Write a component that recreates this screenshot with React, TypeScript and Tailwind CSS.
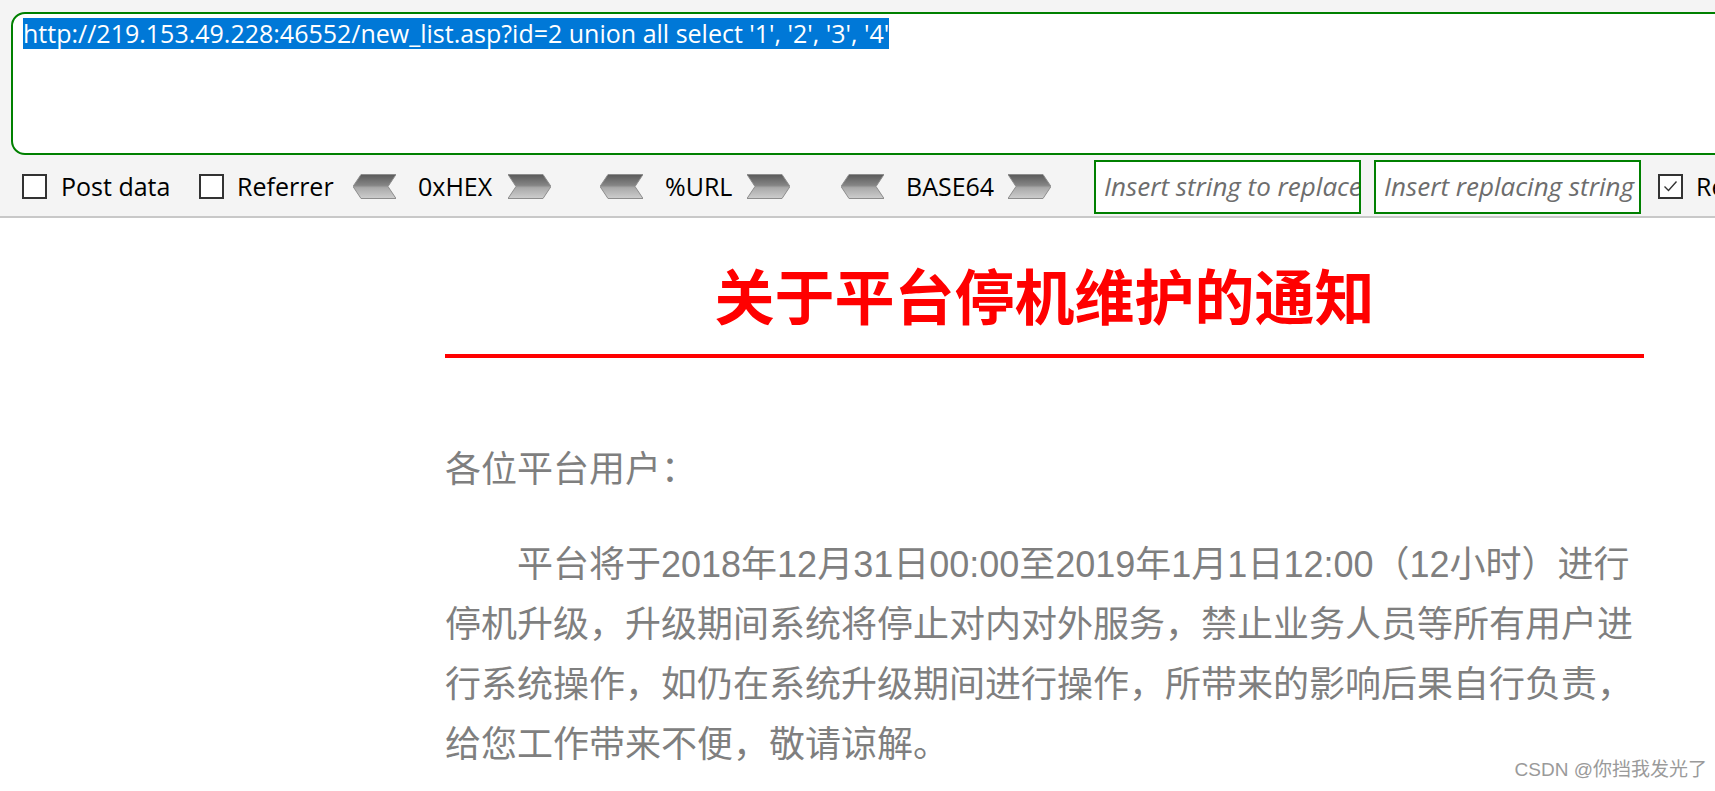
import type { ReactNode } from "react";

function Checkbox({ checked = false }: { checked?: boolean }) {
  return (
    <div className="w-[25px] h-[25px] shrink-0 border-2 border-[#333333] bg-white flex items-center justify-center">
      {checked && (
        <svg width="17" height="17" viewBox="0 0 17 17">
          <path d="M2.5 8.5 L6.5 12.5 L14.5 3.5" fill="none" stroke="#333" strokeWidth="1.4" />
        </svg>
      )}
    </div>
  );
}

function Chevron({ dir }: { dir: "left" | "right" }) {
  const pts =
    dir === "left"
      ? "0,12.5 8,0.5 43,0.5 35,12.5 43,24.5 8,24.5"
      : "0,0.5 35,0.5 43,12.5 35,24.5 0,24.5 8,12.5";
  const id = `g-${dir}`;
  return (
    <svg width="43" height="25" viewBox="0 0 43 25" className="shrink-0">
      <defs>
        <linearGradient id={id} x1="0" y1="0" x2="0" y2="1">
          <stop offset="0" stopColor="#5a5a5a" />
          <stop offset="0.45" stopColor="#858585" />
          <stop offset="0.55" stopColor="#a9a9a9" />
          <stop offset="1" stopColor="#cdcdcd" />
        </linearGradient>
      </defs>
      <polygon points={pts} fill={`url(#${id})`} stroke="#8d8d8d" strokeWidth="1" />
    </svg>
  );
}

function Codec({ label, textW, ml }: { label: string; textW: string; ml: string }) {
  return (
    <div className={`flex items-center shrink-0 ${ml}`}>
      <Chevron dir="left" />
      <span className={`ml-[22px] shrink-0 ${textW} text-black`}>{label}</span>
      <Chevron dir="right" />
    </div>
  );
}

function Field({ placeholder, ml }: { placeholder: string; ml: string }): ReactNode {
  return (
    <div
      className={`${ml} w-[267px] h-[54px] shrink-0 border-2 border-[#008000] bg-white flex items-center pl-[8px] overflow-hidden`}
    >
      <span className="italic text-[26px] text-[#6d6d6d] whitespace-nowrap">{placeholder}</span>
    </div>
  );
}

export default function App() {
  const url =
    "http://219.153.49.228:46552/new_list.asp?id=2 union all select '1', '2', '3', '4'";

  return (
    <div className="relative w-full h-[791px] overflow-hidden bg-white">
      {/* hackbar */}
      <div className="bg-[#f4f4f4] pt-[12px] overflow-hidden border-b-2 border-[#c8c8c8] font-['Open_Sans',sans-serif]">
        <div className="ml-[11px] w-[1800px] h-[143px] rounded-[14px] border-2 border-[#008000] bg-white pl-[10px] pt-[4px]">
          <span className="bg-[#0078d7] text-white text-[25px] leading-[31px] inline-block whitespace-pre">
            {url}
          </span>
        </div>

        <div className="h-[61px] flex items-center pl-[22px] pt-[2px] text-[25px] whitespace-nowrap">
          <div className="flex items-center w-[177px] shrink-0">
            <Checkbox />
            <span className="ml-[14px] text-black">Post data</span>
          </div>
          <div className="flex items-center w-[154px] shrink-0">
            <Checkbox />
            <span className="ml-[13px] text-black">Referrer</span>
          </div>
          <Codec label="0xHEX" textW="w-[90px]" ml="" />
          <Codec label="%URL" textW="w-[82px]" ml="ml-[49px]" />
          <Codec label="BASE64" textW="w-[102px]" ml="ml-[51px]" />
          <Field placeholder="Insert string to replace" ml="ml-[43px]" />
          <Field placeholder="Insert replacing string" ml="ml-[13px]" />
          <div className="ml-[17px] flex items-center shrink-0">
            <Checkbox checked />
            <span className="ml-[13px] text-black">Replace</span>
          </div>
        </div>
      </div>

      {/* notice */}
      <div className="ml-[445px] w-[1199px] font-['Liberation_Sans','Noto_Sans_CJK_SC',sans-serif]">
        <h1 className="mt-[40px] pb-[24px] border-b-4 border-[#ff0000] text-center text-[60px] leading-[72px] font-bold text-[#ff0000] font-['Noto_Sans_CJK_SC',sans-serif]">
          关于平台停机维护的通知
        </h1>

        <div className="mt-[82px] text-[36px] leading-[60px] text-[#7f7f7f]">
          <p>各位平台用户：</p>
          <div className="mt-[35px] whitespace-nowrap">
            <p className="pl-[72px]">平台将于2018年12月31日00:00至2019年1月1日12:00（12小时）进行</p>
            <p>停机升级，升级期间系统将停止对内对外服务，禁止业务人员等所有用户进</p>
            <p>行系统操作，如仍在系统升级期间进行操作，所带来的影响后果自行负责，</p>
            <p>给您工作带来不便，敬请谅解。</p>
          </div>
        </div>
      </div>

      <div className="absolute right-[8px] bottom-[7px] text-[19px] text-[#9a9a9a] font-['Liberation_Sans','Noto_Sans_CJK_SC',sans-serif]">
        CSDN @你挡我发光了
      </div>
    </div>
  );
}
